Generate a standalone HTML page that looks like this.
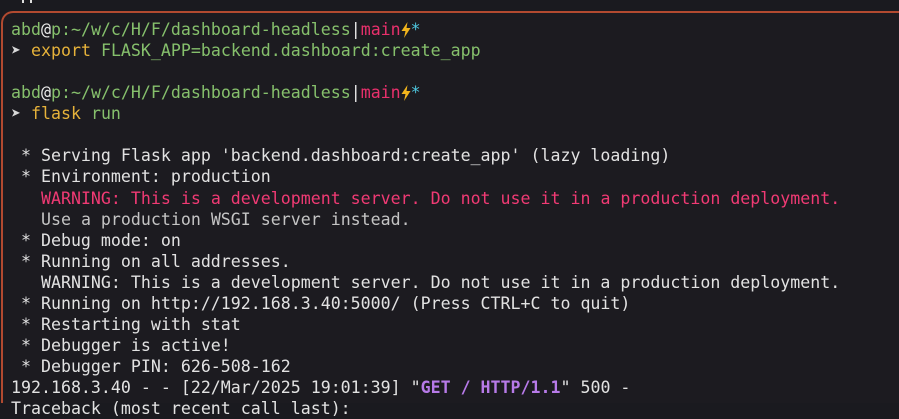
<!DOCTYPE html>
<html><head><meta charset="utf-8"><style>
html,body{margin:0;padding:0;width:899px;height:403px;overflow:hidden;background:#1a1a1f;}
.win{position:absolute;left:1px;top:11px;width:920px;height:392px;border:2.5px solid #b24a30;border-bottom:none;border-radius:12px 12px 0 0;background:#1c1b20;box-sizing:border-box;}
pre{position:absolute;left:11px;top:19px;margin:0;font-family:"DejaVu Sans Mono","Liberation Mono",monospace;font-size:16.6px;line-height:21.06px;color:#e2e2e2;white-space:pre;}
.g{color:#86c06c}.w{color:#e8e8e8}.p{color:#e8306c}.y{color:#e6b23a}.c{color:#4fc8e0}.r{color:#f03a74}.gr{color:#c4c4c4}.v{color:#b77ae8;font-weight:bold}.a{color:#d8d8d8}
.top{position:absolute;left:22px;top:0;width:10px;height:3px;border-left:2px solid #ddd;border-right:2px solid #ddd;box-sizing:border-box}
.bolt{display:inline-block;width:10px;height:16px;vertical-align:-3px;}
</style></head><body>
<div class="top"></div>
<div class="win"></div>
<pre><span class="g">abd</span><span class="w">@</span><span class="g">p:~/w/c/H/F/dashboard-headless</span><span class="w">|</span><span class="p">main</span><svg class="bolt" viewBox="0 0 10 16"><path d="M6.5 0 L0.5 9 H4.5 L3 16 L9.5 6 H5.5 Z" fill="#f2b51c"/></svg><span class="c">*</span>
<span class="a">➤</span> <span class="y">export</span> <span class="g">FLASK_APP=backend.dashboard:create_app</span>

<span class="g">abd</span><span class="w">@</span><span class="g">p:~/w/c/H/F/dashboard-headless</span><span class="w">|</span><span class="p">main</span><svg class="bolt" viewBox="0 0 10 16"><path d="M6.5 0 L0.5 9 H4.5 L3 16 L9.5 6 H5.5 Z" fill="#f2b51c"/></svg><span class="c">*</span>
<span class="a">➤</span> <span class="y">flask</span> <span class="g">run</span>

 * Serving Flask app 'backend.dashboard:create_app' (lazy loading)
 * Environment: production
   <span class="r">WARNING: This is a development server. Do not use it in a production deployment.</span>
   <span class="gr">Use a production WSGI server instead.</span>
 * Debug mode: on
 * Running on all addresses.
   WARNING: This is a development server. Do not use it in a production deployment.
 * Running on http://192.168.3.40:5000/ (Press CTRL+C to quit)
 * Restarting with stat
 * Debugger is active!
 * Debugger PIN: 626-508-162
192.168.3.40 - - [22/Mar/2025 19:01:39] "<span class="v">GET / HTTP/1.1</span>" 500 -
Traceback (most recent call last):</pre>
</body></html>
